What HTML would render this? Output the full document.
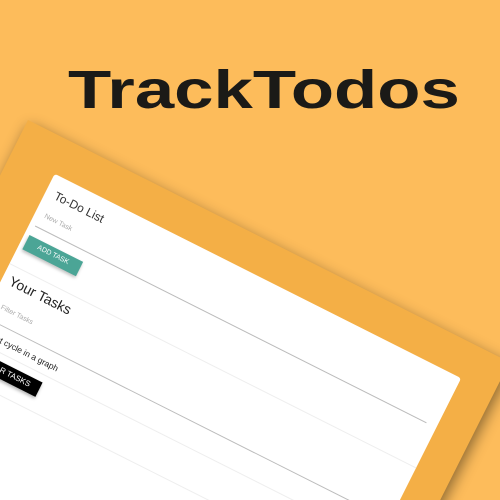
<!DOCTYPE html>
<html><head><meta charset="utf-8"><style>
html,body{margin:0;padding:0;width:500px;height:500px;overflow:hidden;}
body{background:#fdbc5b;font-family:"Liberation Sans",sans-serif;}
.wrap{position:relative;width:500px;height:500px;overflow:hidden;}
.title{position:absolute;left:68px;top:57px;font-size:54px;font-weight:bold;color:#1b1a17;transform-origin:0 0;transform:scaleX(1.31);white-space:nowrap;line-height:66px;-webkit-text-stroke:0px;}
.panel{position:absolute;left:28px;top:120px;width:539px;height:560px;background:#f4af46;transform-origin:0 0;transform:rotate(26.7deg);box-shadow:4px 4px 14px rgba(0,0,0,.45);}
.card{position:absolute;left:48px;top:36px;width:455px;height:490px;background:#fff;border-radius:3px;}
.card div{position:absolute;white-space:nowrap;}
.line{height:0;border-top:1px solid #ddd;}
.dark{border-top:1px solid #bbb;}
</style></head><body><div class="wrap">
<div class="title">TrackTodos</div>
<div class="panel"><div class="card">
  <div style="left:10px;top:12px;font-size:12px;color:#333;">To-Do List</div>
  <div style="left:10px;top:39px;font-size:7px;color:#aaa;">New Task</div>
  <div class="line dark" style="left:6px;top:55px;width:438px;"></div>
  <div style="left:5px;top:66px;width:60px;height:16px;background:#4ba596;color:#fff;font-size:7px;line-height:16px;text-align:center;box-shadow:0 2px 3px rgba(0,0,0,.25);">ADD TASK</div>
  <div class="line" style="left:0;top:100px;width:455px;border-color:#eee;"></div>
  <div style="left:8px;top:107px;font-size:14px;color:#222;">Your Tasks</div>
  <div style="left:12px;top:140px;font-size:7px;color:#aaa;">Filter Tasks</div>
  <div class="line dark" style="left:0;top:159px;width:444px;"></div>
  <div style="left:4px;top:168px;font-size:8.5px;color:#222;">Detect cycle in a graph</div>
  <div class="line" style="left:0;top:184px;width:455px;border-color:#eee;"></div>
  <div style="left:8px;top:192px;width:75px;height:16px;background:#000;color:#fff;font-size:8px;line-height:16px;text-align:center;box-shadow:0 2px 3px rgba(0,0,0,.3);">CLEAR TASKS</div>
  <div class="line" style="left:0;top:222px;width:455px;border-color:#eee;"></div>
</div></div>
</div></body></html>
